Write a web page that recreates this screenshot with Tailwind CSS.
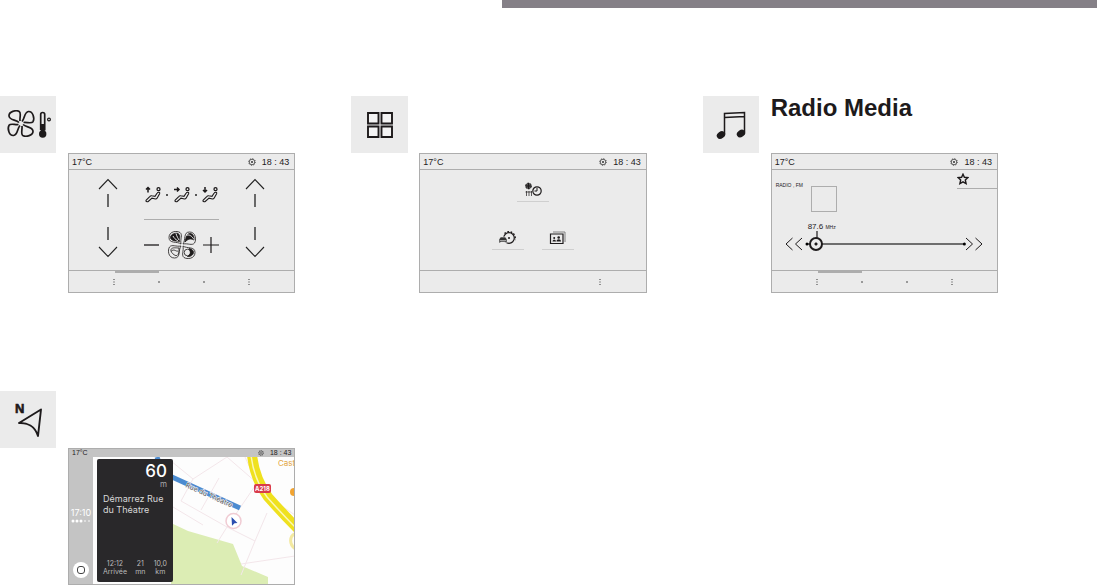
<!DOCTYPE html>
<html lang="fr">
<head>
    <meta charset="UTF-8">
    <meta name="viewport" content="width=device-width, initial-scale=1.0">
    <title>Radio Media</title>
    <script src="https://cdn.jsdelivr.net/npm/@tailwindcss/browser@4"></script>
</head>
<body class="bg-white text-[#1d1a1b] font-['Liberation_Sans',Arial,sans-serif]">
    <div class="ml-[502px] h-2 bg-[#858087]"></div>

    <!-- Shared symbols -->
    <svg class="hidden">
        <symbol id="gear" viewBox="0 0 8 8">
            <circle cx="4" cy="4" r="2.8" fill="none" stroke="#333" stroke-width=".8"/>
            <circle cx="4" cy="4" r="3.5" fill="none" stroke="#444" stroke-width=".8" stroke-dasharray="1 1.75"/>
            <circle cx="4" cy="4" r="1" fill="#333"/>
        </symbol>
        <symbol id="dots" viewBox="0 0 4 8">
            <path d="M1.5 1h1v1h-1zM1.5 3.5h1v1h-1zM1.5 6h1v1h-1z" fill="#333"/>
        </symbol>
        <symbol id="dot" viewBox="0 0 4 8">
            <rect x="1" y="3" width="2" height="2" fill="#999"/>
        </symbol>
        <symbol id="arrow-up" viewBox="0 0 20 30">
            <path d="M1 11 10 1.5 19 11" fill="none" stroke="#222" stroke-width="1.1"/>
            <path d="M10 16v13" stroke="#222" stroke-width="1.3"/>
        </symbol>
        <symbol id="arrow-down" viewBox="0 0 20 32">
            <path d="M10 1v13" stroke="#222" stroke-width="1.3"/>
            <path d="M1 21 10 30.5 19 21" fill="none" stroke="#222" stroke-width="1.1"/>
        </symbol>
        <symbol id="seat" viewBox="0 0 18 18">
            <circle cx="14.5" cy="3.2" r="1.5" fill="none" stroke="#1d1a1b" stroke-width="1.3"/>
            <path d="M14.600 6.200c1 0 1.300.7 1 1.500L13.200 12c-.4.8-1 1-1.800 1L8 12.200 4.200 15.500c-.8.700-3-.2-2-1.300L6 10.300c.5-.6 1-.7 1.800-.5l3.200.6L13.200 7c.3-.5.6-.8 1.400-.8z" fill="none" stroke="#1d1a1b" stroke-width="1.100"/>
        </symbol>
    </svg>

    <main class="grid grid-cols-3 gap-y-[98px] pt-[88px] pr-[43px]">
        <!-- Climate -->
        <article>
            <div class="flex h-[57px]">
                <div class="flex w-14 items-center justify-center bg-[#ebebeb]">
                    <svg class="h-[30px] w-[46px]" viewBox="0 0 46 30" fill="none" stroke="#1d1a1b" stroke-width="1.7" aria-label="Climate">
                        <g transform="translate(16 13.500)">
                            <path id="blade" d="M-2-1C-5-4-11.500-3-12-7.500-12.300-12-5-13.800-1.800-12 .5-10.500-1.500-6-1-2.500"/>
                            <use href="#blade" transform="rotate(90)"/>
                            <use href="#blade" transform="rotate(180)"/>
                            <use href="#blade" transform="rotate(270)"/>
                        </g>
                        <path d="M35.700 20V4.500a2 2 0 0 1 4 0v16"/>
                        <path d="M35.700 14h4v8h-4z" fill="#1d1a1b" stroke="none"/>
                        <circle cx="37.700" cy="24" r="3.700" fill="#1d1a1b" stroke="none"/>
                        <circle cx="44" cy="9.500" r="1.400" stroke-width="1.200"/>
                    </svg>
                </div>
            </div>
            <section class="ml-[68px] mr-14 border border-[#adadad] bg-[#ebebeb]">
                <div class="flex h-4 items-center border-b border-[#adadad] pr-[5px] pl-[3px] text-[9px] leading-4">
                    <span>17°C</span>
                    <svg class="ml-auto mr-1.5 size-2"><use href="#gear"/></svg>
                    <span>18 : 43</span>
                </div>
                <div class="flex h-[100px] px-[29px]">
                    <div class="flex flex-col justify-between pt-2 pb-3">
                        <button class="block" aria-label="Left warmer"><svg class="block h-[30px] w-5"><use href="#arrow-up"/></svg></button>
                        <button class="block" aria-label="Left cooler"><svg class="block h-8 w-5"><use href="#arrow-down"/></svg></button>
                    </div>
                    <div class="mx-[26px] flex flex-1 flex-col">
                        <div class="flex h-[50px] items-center justify-between border-b border-[#adadad]">
                            <button aria-label="Windscreen"><svg class="block size-[18px]" viewBox="0 0 18 18"><use href="#seat"/><path d="M4 6.500v-5M2 3.500l2-2 2 2" fill="none" stroke="#1d1a1b" stroke-width="1.500"/></svg></button>
                            <span class="size-0.5 bg-[#555]"></span>
                            <button aria-label="Face"><svg class="block size-[18px]" viewBox="0 0 18 18"><use href="#seat"/><path d="M1 3.500h5M4 1.500l2 2-2 2" fill="none" stroke="#1d1a1b" stroke-width="1.500"/></svg></button>
                            <span class="size-0.5 bg-[#555]"></span>
                            <button aria-label="Feet"><svg class="block size-[18px]" viewBox="0 0 18 18"><use href="#seat"/><path d="M4 1v5M2 4l2 2 2-2" fill="none" stroke="#1d1a1b" stroke-width="1.500"/></svg></button>
                        </div>
                        <div class="flex h-[50px] items-center justify-between">
                            <button aria-label="Fan slower"><svg class="block size-4" viewBox="0 0 16 16"><path d="M0 8h15" stroke="#1d1a1b" stroke-width="1.300"/></svg></button>
                            <svg class="size-7" viewBox="-14 -14 28 28" fill="none" stroke="#1d1a1b" stroke-width=".8">
                                <path id="fan-blade" d="M-1-1C-5-4-13-1-13-7.500S-5-14.500-2-12.500C1-10-2-6-1-1z"/>
                                <use href="#fan-blade" transform="rotate(90)"/>
                                <use href="#fan-blade" transform="rotate(180)"/>
                                <use href="#fan-blade" transform="rotate(270)"/>
                                <!-- Blade shading -->
                                <path d="M-2.500-3.500C-5-4-11.500-4-11.500-7.500S-6-12.500-4-11.500C-1-9.500-3-6-2.500-3.500z" fill="#1d1a1b"/>
                                <path d="M-9-9C-8-7-7-6-4-4M-6-11.500C-5-8-4-7-3-5" stroke="#ebebeb" stroke-width="1"/>
                                <path d="M3-3C4-8 5-11.500 8-11.500S12.500-8 12-5C8-7 6-6 3-3z" fill="#1d1a1b"/>
                                <path d="M4.500-9.500C7-11 10-9 12-5.500" stroke="#ebebeb" stroke-width="1"/>
                                <path d="M7 3.500C9.500 4 11.500 5 11.500 7.500S8 12 5.500 11.500C9 9.500 9 7 7 3.500z" fill="#1d1a1b"/>
                                <circle cx="5.500" cy="7.500" r="3.300"/>
                                <path d="M-3 3C-6 3-10 2-11 4.500S-7 11.500-5 10.500-3 6-3 3zM-11 6.500C-8 3-6 7-4 6"/>
                            </svg>
                            <button aria-label="Fan faster"><svg class="block size-4" viewBox="0 0 16 16"><path d="M0 8h16M8 0v16" stroke="#1d1a1b" stroke-width="1.200"/></svg></button>
                        </div>
                    </div>
                    <div class="flex flex-col justify-between pt-2 pb-3">
                        <button class="block" aria-label="Right warmer"><svg class="block h-[30px] w-5"><use href="#arrow-up"/></svg></button>
                        <button class="block" aria-label="Right cooler"><svg class="block h-8 w-5"><use href="#arrow-down"/></svg></button>
                    </div>
                </div>
                <div class="relative grid h-[22px] grid-cols-4 items-center justify-items-center border-t border-[#adadad] px-[23px]">
                    <span class="absolute top-0 left-[46px] h-0.5 w-11 bg-[#adadad]"></span>
                    <svg class="h-2 w-1"><use href="#dots"/></svg>
                    <svg class="h-2 w-1"><use href="#dot"/></svg>
                    <svg class="h-2 w-1"><use href="#dot"/></svg>
                    <svg class="h-2 w-1"><use href="#dots"/></svg>
                </div>
            </section>
        </article>

        <!-- Applications -->
        <article>
            <div class="flex h-[57px]">
                <div class="flex w-[57px] items-center justify-center bg-[#ebebeb]">
                    <svg class="size-[26px]" viewBox="0 0 26 26" fill="#f4f4f4" stroke="#1d1a1b" stroke-width="1.900" aria-label="Applications">
                        <path d="M1 1h10.500v10.500H1zM14.500 1H25v10.500H14.500zM1 14.500h10.500V25H1zM14.500 14.500H25V25H14.500z"/>
                    </svg>
                </div>
            </div>
            <section class="ml-[68px] mr-14 border border-[#adadad] bg-[#ebebeb]">
                <div class="flex h-4 items-center border-b border-[#adadad] pr-[5px] pl-[3px] text-[9px] leading-4">
                    <span>17°C</span>
                    <svg class="ml-auto mr-1.5 size-2"><use href="#gear"/></svg>
                    <span>18 : 43</span>
                </div>
                <div class="flex h-[100px] flex-col items-center gap-7 pt-3">
                    <button class="flex h-5 w-8 justify-center border-b border-[#cfcfcf]" aria-label="Climate programming">
                        <svg class="h-4 w-[18px]" viewBox="0 0 18 16" fill="none" stroke="#1d1a1b">
                            <circle cx="4.500" cy="4" r="2.900" fill="#555" stroke-width=".8" stroke-dasharray="2 1"/>
                            <path d="M4.500 1v6M1.500 4h6" stroke-width="1.100"/>
                            <path d="M2.500 9v5M5 9v5M7.500 9v5M1.500 10h6.500" stroke-width=".7"/>
                            <circle cx="13" cy="9" r="4.200" stroke-width="1.200"/>
                            <path d="M13 6v3h-2.500" stroke-width="1"/>
                        </svg>
                    </button>
                    <div class="flex gap-[18px]">
                        <button class="flex h-5 w-8 justify-center border-b border-[#cfcfcf]" aria-label="Vehicle settings">
                            <svg class="h-4 w-[18px]" viewBox="0 0 18 16" fill="none" stroke="#1d1a1b">
                                <circle cx="10" cy="8" r="5.300" stroke-width="1.200"/>
                                <path d="M5.500 3.500A6.400 6.400 0 0 1 16 10" stroke-width="1.400" stroke-dasharray="1.700 1.500"/>
                                <circle cx="10" cy="8" r="1" fill="#1d1a1b" stroke="none"/>
                                <path d="M0 9.500 1.500 7h5L8 9.500V13H6.500v-1h-5v1H0z" fill="#333" stroke="#ebebeb" stroke-width=".6"/>
                                <path d="M1 10.500h6" stroke="#bbb" stroke-width=".8"/>
                            </svg>
                        </button>
                        <button class="flex h-5 w-8 justify-center border-b border-[#cfcfcf]" aria-label="Photos">
                            <svg class="h-4 w-[18px]" viewBox="0 0 18 16" fill="none" stroke="#1d1a1b">
                                <path d="M4 2h12v10" stroke="#777" stroke-width=".9"/>
                                <path d="M1.500 4h12.500v9.500H1.500z" stroke-width="1.200"/>
                                <path d="M3.500 11.500c0-2.500 3.500-2.500 3.500 0zM7.500 11.500c0-3 4.500-3 4.500 0z" fill="#1d1a1b" stroke="none"/>
                                <circle cx="5.200" cy="8" r="1" fill="#1d1a1b" stroke="none"/>
                                <circle cx="9.700" cy="7.500" r="1.300" fill="#1d1a1b" stroke="none"/>
                            </svg>
                        </button>
                    </div>
                </div>
                <div class="grid h-[22px] grid-cols-4 items-center justify-items-center border-t border-[#adadad] px-[23px]">
                    <svg class="col-start-4 h-2 w-1"><use href="#dots"/></svg>
                </div>
            </section>
        </article>

        <!-- Radio Media -->
        <article>
            <div class="flex h-[57px] gap-3">
                <div class="flex w-14 items-center justify-center bg-[#ebebeb]">
                    <svg class="size-[30px]" viewBox="0 0 30 30" fill="none" stroke="#1d1a1b" stroke-width="1.500" aria-hidden="true">
                        <path d="M8.500 24V3.500L28.500 2.500V22M8.500 7.500 28.500 6.500"/>
                        <ellipse cx="5" cy="25" rx="4.500" ry="3.500" transform="rotate(-35 5 25)" fill="#1d1a1b" stroke="none"/>
                        <ellipse cx="25" cy="23.500" rx="4.500" ry="3.500" transform="rotate(-35 25 23.500)" fill="#1d1a1b" stroke="none"/>
                    </svg>
                </div>
                <h2 class="text-2xl leading-6 font-bold">Radio Media</h2>
            </div>
            <section class="ml-[68px] mr-14 border border-[#adadad] bg-[#ebebeb]">
                <div class="flex h-4 items-center border-b border-[#adadad] pr-[5px] pl-[3px] text-[9px] leading-4">
                    <span>17°C</span>
                    <svg class="ml-auto mr-1.5 size-2"><use href="#gear"/></svg>
                    <span>18 : 43</span>
                </div>
                <div class="flex h-[100px] flex-col">
                    <div class="flex h-[52px] items-start">
                        <span class="w-[39px] pt-3 pl-1 text-[5px] leading-[6px] whitespace-nowrap">RADIO , FM</span>
                        <div class="mt-4 size-[26px] border border-[#adadad]"></div>
                        <button class="ml-auto h-[19px] w-10 border-b border-[#adadad]" aria-label="Favourite">
                            <svg class="size-3" viewBox="0 0 12 12"><path d="m6 1.200 1.400 3.100 3.400.3L8.300 7l.8 3.600L6 8.800l-3.100 1.800L3.700 7 1.200 4.600l3.400-.3z" fill="none" stroke="#1d1a1b" stroke-width="1.400"/></svg>
                        </button>
                    </div>
                    <label for="frequency" class="h-[9px] pl-9 text-[8px] leading-[9px]">87.6 <span class="text-[5px]">MHz</span></label>
                    <div class="flex h-[26px] items-center pr-[13px] pl-[13px]">
                        <button aria-label="Seek down"><svg class="block h-4 w-5" viewBox="0 0 20 16"><path d="M7.500 2 1 8l6.500 6M17 2l-6.500 6L17 14" fill="none" stroke="#1d1a1b"/></svg></button>
                        <div class="grid flex-1">
                            <svg class="col-start-1 row-start-1 h-[26px] w-full overflow-visible">
                                <line x1="2" y1="13" x2="100%" y2="13" stroke="#444" stroke-width="1.500"/>
                                <circle cx="2" cy="13" r="1.500"/>
                                <circle cx="100%" cy="13" r="1.500"/>
                                <path d="M12 0v7" stroke="#1d1a1b" stroke-width="1.200"/>
                            </svg>
                            <input id="frequency" type="range" min="87" max="108" step="0.1" value="87.6" class="z-10 col-start-1 row-start-1 m-0 h-[26px] w-full appearance-none bg-transparent [&::-webkit-slider-thumb]:size-[14px] [&::-webkit-slider-thumb]:appearance-none [&::-webkit-slider-thumb]:rounded-full [&::-webkit-slider-thumb]:border-2 [&::-webkit-slider-thumb]:border-[#1d1a1b] [&::-webkit-slider-thumb]:bg-[radial-gradient(circle,#1d1a1b_1px,#ebebeb_2px)]">
                        </div>
                        <button aria-label="Seek up"><svg class="block h-4 w-5" viewBox="0 0 20 16"><path d="M2 2l6.500 6L2 14M11.500 2 18 8l-6.500 6" fill="none" stroke="#1d1a1b"/></svg></button>
                    </div>
                </div>
                <div class="relative grid h-[22px] grid-cols-4 items-center justify-items-center border-t border-[#adadad] px-[23px]">
                    <span class="absolute top-0 left-[46px] h-0.5 w-11 bg-[#adadad]"></span>
                    <svg class="h-2 w-1"><use href="#dots"/></svg>
                    <svg class="h-2 w-1"><use href="#dot"/></svg>
                    <svg class="h-2 w-1"><use href="#dot"/></svg>
                    <svg class="h-2 w-1"><use href="#dots"/></svg>
                </div>
            </section>
        </article>

        <!-- Navigation -->
        <article>
            <div class="flex h-[57px]">
                <div class="flex w-14 items-center justify-center bg-[#ebebeb]">
                    <svg class="h-9 w-7" viewBox="0 0 28 36" aria-label="Navigation">
                        <text x="1" y="11" font-size="13" font-weight="bold" fill="#1d1a1b" stroke="#1d1a1b" stroke-width=".6">N</text>
                        <path d="M27 7.500 5 21c8-.5 16 3 19 13z" fill="none" stroke="#1d1a1b" stroke-width="1.900" stroke-linejoin="round"/>
                    </svg>
                </div>
            </div>
            <section class="ml-[68px] mr-14 border border-[#adadad] bg-[#c4c4c4]">
                <div class="flex h-2 items-center px-[3px] text-[7px] leading-2">
                    <span>17°C</span>
                    <svg class="ml-auto mr-1.5 size-1.5"><use href="#gear"/></svg>
                    <span>18 : 43</span>
                </div>
                <div class="flex h-[127px] font-['Inter',sans-serif]">
                    <div class="flex w-6 flex-col items-center pt-[50px] pb-1.5 text-white">
                        <span class="text-[9px] leading-3">17:10</span>
                        <svg class="h-1 w-5" viewBox="0 0 20 4" fill="#fff">
                            <circle cx="2" cy="2" r="1.500"/><circle cx="6" cy="2" r="1.500"/><circle cx="10" cy="2" r="1.500"/>
                            <circle cx="14" cy="2" r="1" opacity=".6"/><circle cx="18" cy="2" r="1" opacity=".6"/>
                        </svg>
                        <button class="mt-auto flex size-4 items-center justify-center rounded-full bg-white" aria-label="Home">
                            <span class="size-2 rounded-[3px] border border-[#444]"></span>
                        </button>
                    </div>
                    <div class="relative flex-1 overflow-hidden bg-[#fdfdfd]">
                        <!-- Map -->
                        <svg class="absolute inset-0 h-full w-full" viewBox="0 0 202 127" preserveAspectRatio="xMinYMin slice">
                            <path d="M78 66l17 8 45 13 9 22 26 11v7H78z" fill="#dcedb4"/>
                            <path d="M78 4l22 18 34-22M100 22l-12 22 46 26 30-44-30-26M108 53l18-32M134 70l-10 16M134 70l28 14-14 34M164 26l14 16 24 16M162 84l12-28M148 107l54-8M164 26l-12-26M80 50l30 18" fill="none" stroke="#f3e6ea"/>
                            <path d="M159-2c2 18 8 31 16 42 8 9 17 19 31 33" fill="none" stroke="#efe11f" stroke-width="10"/>
                            <path d="M158-2c2 18 8 31 16 42 8 9 17 19 31 33" fill="none" stroke="#fbf7b8" stroke-width="1.500"/>
                            <path d="M204 76c-8 2-9 12 0 17" fill="none" stroke="#f3e9a0" stroke-width="3"/>
                            <path d="M64 0c3 10 8 17 15 20l68 31" fill="none" stroke="#4b8bd0" stroke-width="5"/>
                            <text transform="translate(92 30) rotate(24)" font-size="7" fill="#555" stroke="#fff" stroke-width="1" paint-order="stroke">Rue du Théatre</text>
                            <rect x="161" y="27" width="17" height="9" rx="2" fill="#d93a4a"/>
                            <text x="169.500" y="34" font-size="6" font-weight="bold" fill="#fff" text-anchor="middle">A218</text>
                            <text x="185" y="9" font-size="8" fill="#e3a541">Cast</text>
                            <circle cx="201" cy="35" r="4" fill="#f2a431"/>
                            <circle cx="140.500" cy="64" r="7.500" fill="#fff" stroke="#f0cbd3" stroke-width="1.500"/>
                            <path d="M138.500 60l6 6-3 .2-2.500 2.500z" fill="#2c4fb0"/>
                        </svg>
                        <!-- Route card -->
                        <div class="absolute top-0.5 bottom-0.5 left-1 flex w-[76px] flex-col rounded-xs bg-[#29282a] px-1.5 py-1 text-[#d8d8d8]">
                            <span class="text-right text-[17px] leading-4 font-medium text-white">60</span>
                            <span class="text-right text-[8px] leading-[10px] text-[#aaa]">m</span>
                            <p class="mt-1 text-[9px] leading-[11px] whitespace-nowrap">Démarrez Rue<br>du Théatre</p>
                            <div class="mt-auto flex justify-between pb-0.5 text-center text-[7px] leading-2 text-[#bbb]">
                                <span>12:12<br>Arrivée</span>
                                <span>21<br>mn</span>
                                <span>10,0<br>km</span>
                            </div>
                        </div>
                    </div>
                </div>
            </section>
        </article>
    </main>
</body>
</html>
